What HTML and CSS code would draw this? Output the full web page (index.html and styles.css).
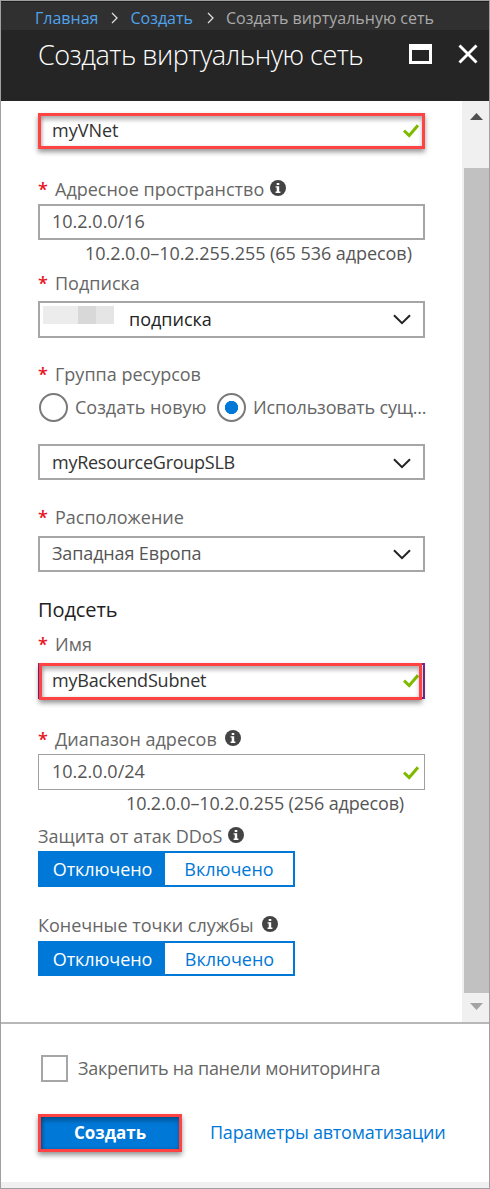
FILE: index.html
```html
<!DOCTYPE html>
<html lang="ru">
<head>
<meta charset="utf-8">
<title>Создать виртуальную сеть</title>
<link rel="stylesheet" href="styles.css">
</head>
<body>
<svg class="defs" width="0" height="0">
  <symbol id="check" viewBox="0 0 16 14"><path d="M1 6.600 L6.200 11.500 L15 1.300" fill="none" stroke="#7fba00" stroke-width="3"/></symbol>
  <symbol id="down" viewBox="0 0 18 11"><path d="M1 1.2 L9 9.2 L17 1.2" fill="none" stroke="#222" stroke-width="2"/></symbol>
  <symbol id="info" viewBox="0 0 16 16"><circle cx="8" cy="8" r="8" fill="#444"/><path d="M6.7 2.9h2.6v2.1H6.7z M5.6 6.2h3.6v5.4h1.2v1.3H5.6v-1.3h1.1V7.5H5.6z" fill="#fff"/></symbol>
</svg>
<div class="blade">
  <nav class="crumbs">
    <a>Главная</a>
    <svg width="7" height="12" viewBox="0 0 7 12"><path d="M1 1l5 5-5 5" fill="none" stroke="#ddd" stroke-width="1.3"/></svg>
    <a>Создать</a>
    <svg width="7" height="12" viewBox="0 0 7 12"><path d="M1 1l5 5-5 5" fill="none" stroke="#ddd" stroke-width="1.3"/></svg>
    <span>Создать виртуальную сеть</span>
  </nav>
  <header class="head">
    <h1>Создать виртуальную сеть</h1>
    <svg class="max" width="23" height="20" viewBox="0 0 23 20"><path fill-rule="evenodd" d="M0 0h23v20H0z M3 6v11h17V6z" fill="#fff"/></svg>
    <svg class="close" width="20" height="20" viewBox="0 0 20 20"><path d="M1.5 1.5l17 17M18.500 1.500l-17 17" stroke="#fff" stroke-width="2.9"/></svg>
  </header>
  <div class="main">
    <form class="form">
      <div class="box marked dark">myVNet<svg class="check"><use href="#check"/></svg></div>

      <div class="label l-space"><b>*</b><span>Адресное пространство</span><svg class="info"><use href="#info"/></svg></div>
      <div class="box t1 raised">10.2.0.0/16</div>
      <div class="help">10.2.0.0–10.2.255.255 (65 536 адресов)</div>

      <div class="label l-sub"><b>*</b><span>Подписка</span></div>
      <div class="box sub dark"><i class="mask"></i>подписка<svg class="down"><use href="#down"/></svg></div>

      <div class="label l-group"><b>*</b><span>Группа ресурсов</span></div>
      <div class="radios">
        <i class="radio"></i><span>Создать новую</span>
        <i class="radio on"></i><span class="tight">Использовать сущ...</span>
      </div>
      <div class="box t-group dark tighter">myResourceGroupSLB<svg class="down"><use href="#down"/></svg></div>

      <div class="label l-loc"><b>*</b><span>Расположение</span></div>
      <div class="box t-loc raised loc">Западная Европа<svg class="down"><use href="#down"/></svg></div>

      <h2>Подсеть</h2>
      <div class="label l-name"><b>*</b><span>Имя</span></div>
      <div class="box t-loc raised dark focus tight">myBackendSubnet<svg class="check"><use href="#check"/></svg><i class="frame"></i></div>

      <div class="label l-range"><b>*</b><span>Диапазон адресов</span><svg class="info wide"><use href="#info"/></svg></div>
      <div class="box t1 raised thin">10.2.0.0/24<svg class="check"><use href="#check"/></svg></div>
      <div class="help second">10.2.0.0–10.2.0.255 (256 адресов)</div>

      <div class="label l-ddos"><span>Защита от атак DDoS</span><svg class="info near"><use href="#info"/></svg></div>
      <div class="toggle t1"><span class="on">Отключено</span><span>Включено</span></div>

      <div class="label l-end"><span>Конечные точки службы</span><svg class="info wide"><use href="#info"/></svg></div>
      <div class="toggle short"><span class="on">Отключено</span><span>Включено</span></div>
    </form>
    <div class="scroll">
      <svg width="13" height="7" viewBox="0 0 13 7"><path d="M0 7L6.500 0L13 7z" fill="#505050"/></svg>
      <div class="thumb"></div>
      <svg width="13" height="7" viewBox="0 0 13 7"><path d="M0 0h13L6.500 7z" fill="#a3a3a3"/></svg>
    </div>
  </div>
  <footer class="foot">
    <div class="pin"><i class="tick"></i><span>Закрепить на панели мониторинга</span></div>
    <div class="actions"><button class="create" type="button">Создать</button><a class="auto">Параметры автоматизации</a></div>
  </footer>
  <div class="strip"></div>
</div>
</body>
</html>
```
FILE: styles.css
```css
* { box-sizing: border-box; }
body { margin: 0; background: #fff; font: 18px/24px "Open Sans", "Noto Sans", sans-serif; color: #666; }
svg { flex: none; display: block; }
.defs { position: absolute; }
.blade { width: 490px; height: 1189px; border: 1px solid #a0a0a0; display: flex; flex-direction: column; overflow: hidden; white-space: nowrap; }

.crumbs { height: 29px; padding: 3px 0 0 34px; border-top: 1px solid #1c1c1c; background: #303030; display: flex; align-items: center; font-size: 16px; color: #aaa; }
.crumbs a { color: #4fa3ec; }
.crumbs a + svg { margin: 0 12px 0 13px; }
.crumbs a:nth-of-type(2) + svg { margin: 0 12px 0 14px; }
.head { height: 71px; padding-left: 37px; background: #252525; display: flex; align-items: flex-start; color: #fff; }
h1 { margin: 7px 0 0; width: 371px; font-size: 27px; line-height: 36px; font-weight: 300; letter-spacing: -0.5px; }
.max { margin-top: 14px; }
.close { margin: 14px 0 0 26px; }

.main { height: 921px; display: flex; justify-content: space-between; }
.form { width: 424px; padding: 12px 0 0 37px; }
.box { height: 36px; padding-left: 12px; border: 2px solid #a6a6a6; display: flex; align-items: center; color: #555; }
.dark { color: #333; }
.raised { padding-bottom: 2px; }
.thin { border-color: #a0a0a0; border-width: 1px; padding-left: 13px; }
.loc { letter-spacing: -0.13px; }
.tight { letter-spacing: -0.18px; }
.tighter { letter-spacing: -0.26px; }
.marked { border: 3px solid #ff4343; padding: 0 0 2px 11px; box-shadow: 0 3px 5px rgba(0,0,0,.42), inset 0 4px 4px rgba(0,0,0,.27), inset 2px 0 3px rgba(0,0,0,.12); }
.check { width: 16px; height: 14px; margin: 2px 4px 0 auto; }
.marked .check { margin-right: 3px; }
.thin .check { margin: 3px 5px 0 auto; }
.down { width: 18px; height: 11px; margin: 2px 12px 0 auto; }
.t1 { margin-top: 1px; }
.sub { height: 37px; margin-top: 4px; padding: 0 0 2px 3px; color: #222; }
.mask { width: 71px; height: 18px; margin: -7px 15px 0 0; background: linear-gradient(90deg, #ececec 35px, #d8d8d8 35px 53px, #e5e5e5 53px); }
.t-group { margin-top: 23px; }
.t-loc { margin-top: 5px; }
.focus { position: relative; border-color: #7a2a90; }
.frame { position: absolute; left: -1px; right: 1px; top: -2px; height: 37px; border: 3px solid #ff4343; box-shadow: 0 3px 5px rgba(0,0,0,.42), inset 0 4px 4px rgba(0,0,0,.27), inset 2px 0 3px rgba(0,0,0,.12); }

.label { height: 28px; display: flex; line-height: 28px; }
.label b { width: 17px; color: #e81123; font-size: 18px; font-weight: 600; }
.info { width: 16px; height: 16px; margin: 5px 0 0 6px; }
.info.wide { margin-left: 8px; }
.info.near { margin-left: 5px; }
.l-space { margin-top: 26px; }
.l-sub { margin-top: 4px; }
.l-group { margin-top: 22px; }
.l-loc { margin-top: 23px; }
.l-name { margin-top: 6px; }
.l-range { margin-top: 26px; }
.l-ddos { margin-top: 7px; }
.l-end { margin-top: 24px; }
.help { height: 24px; margin-top: 1px; padding-left: 47px; color: #555; letter-spacing: -0.05px; }
.help.second { padding-left: 88px; letter-spacing: -0.15px; }
h2 { margin: 24px 0 0; font-size: 20px; line-height: 28px; font-weight: 400; color: #222; letter-spacing: -0.1px; }

.radios { height: 28px; margin-top: 5px; display: flex; align-items: center; }
.radio { flex: none; width: 29px; height: 29px; margin: 0 7px 0 1px; border: 2px solid #7a7a7a; border-radius: 50%; }
.radio.on { margin: 0 7px 0 10.5px; background: radial-gradient(circle, #0078d7 6.300px, transparent 6.900px); }

.toggle { width: 257px; height: 36px; border: 2px solid #0078d7; display: flex; }
.toggle span { width: 128px; line-height: 32px; text-align: center; color: #0078d7; }
.toggle .on { width: 125px; background: #0078d7; color: #fff; letter-spacing: -0.1px; }
.toggle.short { height: 35px; margin-top: 2px; }
.toggle.short span { line-height: 32px; height: 31px; }
.toggle.short span:last-child { padding-left: 1px; }

.scroll { width: 27px; background: #f0f0f0; display: flex; flex-direction: column; align-items: center; padding: 12px 0; justify-content: space-between; }
.thumb { width: 25px; height: 825px; margin: 38px 0 0 2px; background: #c1c1c1; }
.scroll svg { margin-left: 2px; }

.foot { height: 160px; border-top: 2px solid #b8b8b8; padding: 31px 0 0 37px; }
.pin { display: flex; align-items: center; height: 27px; letter-spacing: -0.26px; }
.pin span { padding-bottom: 2px; }
.tick { width: 27px; height: 27px; margin: 0 10px 0 3px; border: 2px solid #a6a6a6; }
.actions { display: flex; align-items: center; height: 38px; margin-top: 32px; }
.create { width: 144px; height: 38px; padding: 0; border: 3px solid #ff4343; background: #0078d7; color: #fff; font: 700 17px/32px "Open Sans", "Noto Sans", sans-serif; box-shadow: 0 3px 5px rgba(0,0,0,.42), inset 0 4px 4px rgba(0,0,0,.27), inset 2px 0 3px rgba(0,0,0,.2); }
.auto { margin-left: 28px; padding-bottom: 2px; color: #0078d7; letter-spacing: -0.24px; }
.strip { height: 6px; background: #f0f0f0; }
```
